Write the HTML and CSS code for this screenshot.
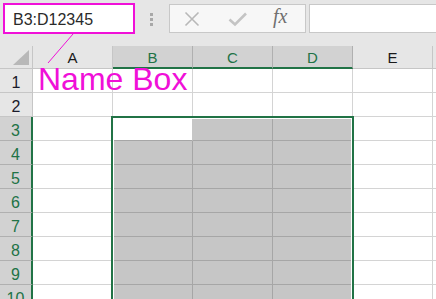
FILE: index.html
```html
<!DOCTYPE html>
<html>
<head>
<meta charset="utf-8">
<link rel="stylesheet" href="styles.css">
</head>
<body>
<div class="app">
  <div class="toolbar">
    <div class="namebox">B3:D12345</div>
    <div class="grip"><i></i><i></i><i></i></div>
    <div class="fbtns">
      <svg class="ic-x" width="16" height="16" viewBox="0 0 16 16"><path d="M1.5 1.5 L14.5 14.5 M14.5 1.5 L1.5 14.5" stroke="#b8b8b8" stroke-width="1.6" fill="none"/></svg>
      <svg class="ic-check" width="20" height="16" viewBox="0 0 20 16"><path d="M1.5 8.5 L7 13.5 L18 2.5" stroke="#c4c4c4" stroke-width="2.6" fill="none"/></svg>
      <span class="fx">fx</span>
    </div>
    <div class="finput"></div>
  </div>
  <div class="sheet">
    <div class="corner"><span class="tri"></span></div>
    <div class="ch">A</div>
    <div class="ch sel">B</div>
    <div class="ch sel">C</div>
    <div class="ch sel">D</div>
    <div class="ch">E</div>
    <div class="ch end"></div>

    <div class="rh">1</div><div class="c"></div><div class="c"></div><div class="c"></div><div class="c"></div><div class="c"></div><div class="c end"></div>
    <div class="rh">2</div><div class="c"></div><div class="c"></div><div class="c"></div><div class="c"></div><div class="c"></div><div class="c end"></div>
    <div class="rh sel">3</div><div class="c"></div><div class="c act"></div><div class="c g"></div><div class="c g"></div><div class="c"></div><div class="c end"></div>
    <div class="rh sel">4</div><div class="c"></div><div class="c g"></div><div class="c g"></div><div class="c g"></div><div class="c"></div><div class="c end"></div>
    <div class="rh sel">5</div><div class="c"></div><div class="c g"></div><div class="c g"></div><div class="c g"></div><div class="c"></div><div class="c end"></div>
    <div class="rh sel">6</div><div class="c"></div><div class="c g"></div><div class="c g"></div><div class="c g"></div><div class="c"></div><div class="c end"></div>
    <div class="rh sel">7</div><div class="c"></div><div class="c g"></div><div class="c g"></div><div class="c g"></div><div class="c"></div><div class="c end"></div>
    <div class="rh sel">8</div><div class="c"></div><div class="c g"></div><div class="c g"></div><div class="c g"></div><div class="c"></div><div class="c end"></div>
    <div class="rh sel">9</div><div class="c"></div><div class="c g"></div><div class="c g"></div><div class="c g"></div><div class="c"></div><div class="c end"></div>
    <div class="rh sel">10</div><div class="c"></div><div class="c g"></div><div class="c g"></div><div class="c g"></div><div class="c"></div><div class="c end"></div>
  </div>
  <div class="selection"></div>
  <svg class="pointer" width="436" height="299" viewBox="0 0 436 299"><line x1="73" y1="34" x2="48" y2="63" stroke="#f010d8" stroke-width="1"/></svg>
  <div class="label">Name Box</div>
</div>
</body>
</html>
```
FILE: styles.css
```css
html, body {
  margin: 0;
  padding: 0;
  background: #ffffff;
}
.app {
  position: relative;
  width: 436px;
  height: 299px;
  overflow: hidden;
  font-family: "Liberation Sans", Arial, sans-serif;
}
.toolbar {
  height: 46px;
  box-sizing: border-box;
  padding: 3px 0 0 3px;
  background: #e6e6e6;
  display: flex;
  align-items: flex-start;
}
.namebox {
  width: 132px;
  height: 31px;
  box-sizing: border-box;
  border: 2px solid #f010d8;
  background: #ffffff;
  padding: 1px 0 0 8px;
  font-size: 16px;
  line-height: 27px;
  color: #2a2a2a;
}
.grip {
  margin: 10px 0 0 15px;
  display: flex;
  flex-direction: column;
  gap: 2px;
}
.grip i {
  display: block;
  width: 3px;
  height: 3px;
  background: #a8a8a8;
}
.fbtns {
  margin: 1px 0 0 16px;
  width: 137px;
  height: 29px;
  box-sizing: border-box;
  border: 1px solid #c8c8c8;
  background: #f7f7f7;
  display: flex;
  align-items: center;
  padding-left: 14px;
}
.ic-x { margin-top: 1px; }
.ic-check { margin-left: 28px; margin-top: 0px; }
.fx {
  margin-left: 25px;
  font-family: "Liberation Serif", "Times New Roman", serif;
  font-style: italic;
  font-size: 20px;
  color: #707070;
  margin-top: -4px;
}
.finput {
  margin: 1px 0 0 3px;
  flex: 1;
  height: 29px;
  box-sizing: border-box;
  border: 1px solid #c8c8c8;
  border-right: none;
  background: #ffffff;
}
.sheet {
  display: grid;
  grid-template-columns: 33px repeat(5, 80px) 1fr;
  grid-template-rows: 23px repeat(10, 24px);
}
.sheet > div {
  box-sizing: border-box;
}
.corner {
  background: #e6e6e6;
  border-right: 1px solid #c6c6c6;
  border-bottom: 1px solid #c6c6c6;
  position: relative;
}
.tri {
  position: absolute;
  right: 3px;
  bottom: 3px;
  width: 0;
  height: 0;
  border-left: 16px solid transparent;
  border-bottom: 15px solid #b8b8b8;
}
.ch {
  background: #e6e6e6;
  border-right: 1px solid #c6c6c6;
  border-bottom: 1px solid #c6c6c6;
  text-align: center;
  font-size: 15px;
  line-height: 22px;
  padding-top: 1px;
  color: #1a1a1a;
}
.ch.sel {
  background: #d2d2d2;
  color: #217346;
  border-right-color: #b0b0b0;
  border-bottom: 2px solid #217346;
}
.ch.end { border-right: none; }
.rh {
  background: #e6e6e6;
  border-right: 1px solid #c6c6c6;
  border-bottom: 1px solid #c6c6c6;
  text-align: center;
  font-size: 16px;
  line-height: 23px;
  padding-top: 2px;
  color: #1a1a2a;
}
.rh.sel {
  background: #d2d2d2;
  color: #217346;
  border-right: 2px solid #217346;
  border-bottom-color: #b0b0b0;
}
.c {
  background: #ffffff;
  border-right: 1px solid #d4d4d4;
  border-bottom: 1px solid #d4d4d4;
}
.c.end { border-right: none; }
.c.g {
  background: #c6c6c6;
  border-right-color: #a6a6a6;
  border-bottom-color: #a6a6a6;
}
.c.act {
  background: #ffffff;
  border-right-color: #c6c6c6;
  border-bottom-color: #a6a6a6;
}
.selection {
  position: absolute;
  left: 111px;
  top: 116px;
  width: 243px;
  height: 200px;
  box-sizing: border-box;
  border: 2px solid #217346;
  box-shadow: inset 0 0 0 1px #ffffff;
}
.pointer {
  position: absolute;
  left: 0;
  top: 0;
  pointer-events: none;
}
.label {
  position: absolute;
  left: 38px;
  top: 63px;
  font-size: 32px;
  line-height: 32px;
  color: #f010d8;
  white-space: nowrap;
}
```
